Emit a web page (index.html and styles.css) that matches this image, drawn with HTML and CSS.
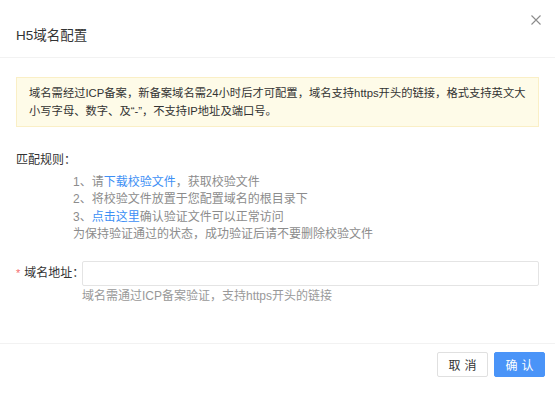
FILE: index.html
```html
<!DOCTYPE html>
<html lang="zh">
<head>
<meta charset="utf-8">
<link rel="stylesheet" href="styles.css">
</head>
<body>
<div class="dialog">
  <div class="header">
    <span class="title">H5域名配置</span>
    <span class="close" aria-label="关闭">
      <svg width="10" height="10" viewBox="0 0 10 10"><path d="M0.5 0.5L9.5 9.5M9.5 0.5L0.5 9.5" stroke="#8c8c8c" stroke-width="1.1" fill="none"/></svg>
    </span>
  </div>
  <div class="body">
    <div class="alert">域名需经过ICP备案，新备案域名需24小时后才可配置，域名支持https开头的链接，格式支持英文大小写字母、数字、及“-”，不支持IP地址及端口号。</div>
    <div class="rules">
      <div class="rules-title">匹配规则：</div>
      <ul class="rules-list">
        <li>1、请<a class="link">下载校验文件</a>，获取校验文件</li>
        <li>2、将校验文件放置于您配置域名的根目录下</li>
        <li>3、<a class="link">点击这里</a>确认验证文件可以正常访问</li>
        <li>为保持验证通过的状态，成功验证后请不要删除校验文件</li>
      </ul>
    </div>
    <div class="form-row">
      <label class="label"><span class="req">*</span>域名地址：</label>
      <div class="field">
        <input class="input" type="text">
        <div class="hint">域名需通过ICP备案验证，支持https开头的链接</div>
      </div>
    </div>
  </div>
  <div class="footer">
    <button class="btn">取消</button>
    <button class="btn btn-primary">确认</button>
  </div>
</div>
</body>
</html>
```
FILE: styles.css
```css
* { box-sizing: border-box; }
html, body { margin: 0; padding: 0; background: #fff; }
body {
  font-family: "Liberation Sans", "Noto Sans CJK SC", sans-serif;
  color: #333;
  font-size: 12px;
}
.dialog { width: 555px; height: 399px; position: relative; }
.header {
  height: 58px;
  padding: 0 16px;
  display: flex;
  align-items: center;
  border-bottom: 1px solid #f2f2f2;
}
.title { font-size: 13.5px; color: #333; padding-top: 11px; }
.close {
  position: absolute;
  top: 15px;
  right: 14px;
  width: 10px;
  height: 10px;
  display: block;
  line-height: 0;
}
.body { padding: 19px 16px 0; height: 285px; }
.alert {
  background: #fefbe8;
  border: 1px solid #faefc6;
  padding: 6px 12px 6px 12px;
  font-size: 11.3px;
  line-height: 18px;
  color: #333;
}
.rules { margin-top: 25px; }
.rules-title { line-height: 17px; color: #333; }
.rules-list {
  list-style: none;
  margin: 5px 0 0;
  padding: 0 0 0 57px;
  color: #8c8c8c;
  line-height: 17.3px;
}
.link { color: #3d8ff5; text-decoration: none; }
.form-row { display: flex; margin-top: 18px; align-items: flex-start; }
.label {
  width: 66px;
  line-height: 25px;
  color: #333;
  white-space: nowrap;
}
.req { color: #f56c6c; margin-right: 4px; font-size: 11px; }
.field { flex: 1; }
.input {
  display: block;
  width: 100%;
  height: 25px;
  border: 1px solid #e4e4e4;
  border-radius: 2px;
  outline: none;
  padding: 0 8px;
  font: inherit;
}
.hint { color: #999; line-height: 18px; margin-top: 1px; }
.footer {
  border-top: 1px solid #f2f2f2;
  display: flex;
  justify-content: flex-end;
  gap: 6px;
  padding: 8px 10px 0 0;
}
.btn {
  width: 51px;
  height: 25px;
  border: 1px solid #e0e0e0;
  border-radius: 2px;
  background: #fff;
  color: #333;
  font-family: inherit;
  font-size: 12px;
  letter-spacing: 4px;
  text-indent: 4px;
  padding: 0;
}
.btn-primary { background: #4a94f8; border-color: #4a94f8; color: #fff; }
```
